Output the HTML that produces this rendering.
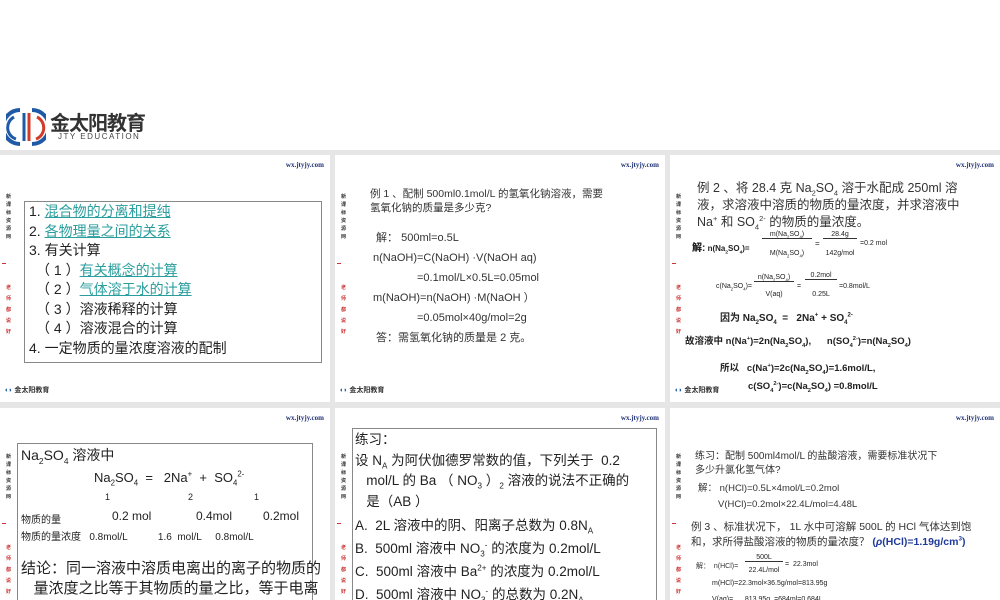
<!DOCTYPE html>
<html><head><meta charset="utf-8"><style>
*{margin:0;padding:0;box-sizing:border-box}
body{width:1000px;height:600px;overflow:hidden;background:#fff;position:relative;font-family:"Liberation Sans","Noto Sans CJK SC",sans-serif;color:#222}
.bg{position:absolute;left:0;top:150px;width:1000px;height:450px;background:#e6e6e6}
.s{position:absolute;background:#fff;overflow:hidden}
.s div{position:absolute;white-space:nowrap}
.url{right:6px;top:6px;font:bold 7px "Liberation Serif",serif;color:#223377}
.side{left:6px;top:38px;width:6px;font-size:5px;line-height:8px;color:#333;font-weight:bold;white-space:normal!important}
.red{color:#c33}
.dash{left:2px;top:108px;width:4px;height:1px;background:#c33}
.box{border:1px solid #888}
.u{color:#2a9d9d;text-decoration:underline}
sub,sup{font-size:60%;line-height:0}
.ml{font-size:11px;line-height:20px}
</style></head><body>
<svg style="position:absolute;left:6px;top:107px" width="40" height="40" viewBox="0 0 40 40">
<path d="M14 3 A17 17 0 0 0 14 37" fill="none" stroke="#1f5aa6" stroke-width="4"/>
<path d="M8 10 A12 12 0 0 0 10 32" fill="none" stroke="#1f5aa6" stroke-width="3"/>
<path d="M18 6 L18 34" stroke="#1f5aa6" stroke-width="3"/>
<path d="M23 6 L23 34" stroke="#d23b2b" stroke-width="3"/>
<path d="M26 3 A17 17 0 0 1 26 37" fill="none" stroke="#1f5aa6" stroke-width="4"/>
<path d="M31 10 A12 12 0 0 1 30 32" fill="none" stroke="#d23b2b" stroke-width="3"/>
</svg>
<div style="position:absolute;left:50px;top:107px;font-size:20px;font-weight:bold;color:#333;letter-spacing:-1px">金太阳教育</div>
<div style="position:absolute;left:58px;top:132px;font-size:8px;color:#444;letter-spacing:1.5px">JTY EDUCATION</div>
<div class="bg"></div>

<!-- slide 1 -->
<div class="s" style="left:0;top:155px;width:330px;height:247px">
<div class="url">wx.jtyjy.com</div>
<div class="side">新课标资源网</div><div class="dash"></div>
<div class="side red" style="top:128px;line-height:11px">老师都说好</div>
<div class="box" style="left:24px;top:46px;width:298px;height:162px"></div>
<div style="left:29px;top:47px;font-size:14px;line-height:19.5px">1. <span class="u">混合物的分离和提纯</span><br>2. <span class="u">各物理量之间的关系</span><br>3. 有关计算<br>　（ 1 ）<span class="u">有关概念的计算</span><br>　（ 2 ）<span class="u">气体溶于水的计算</span><br>　（ 3 ）溶液稀释的计算<br>　（ 4 ）溶液混合的计算<br>4. 一定物质的量浓度溶液的配制</div>
<div style="left:4px;top:230px;font-size:7px;font-weight:bold;color:#1f5aa6">◖◗ <span style="color:#333">金太阳教育</span></div>
</div>

<!-- slide 2 -->
<div class="s" style="left:335px;top:155px;width:330px;height:247px">
<div class="url">wx.jtyjy.com</div>
<div class="side">新课标资源网</div><div class="dash"></div>
<div class="side red" style="top:128px;line-height:11px">老师都说好</div>
<div style="left:35px;top:32px;font-size:10.5px;line-height:14px;color:#333">例 1 、配制 500ml0.1mol/L 的氢氧化钠溶液，需要<br>氢氧化钠的质量是多少克?</div>
<div class="ml" style="left:38px;top:73px;color:#333">&nbsp;解： 500ml=o.5L<br>n(NaOH)=C(NaOH) ·V(NaOH aq)<br>　　　　=0.1mol/L×0.5L=0.05mol<br>m(NaOH)=n(NaOH) ·M(NaOH ）<br>　　　　=0.05mol×40g/mol=2g<br>&nbsp;答：需氢氧化钠的质量是 2 克。</div>
<div style="left:4px;top:230px;font-size:7px;font-weight:bold;color:#1f5aa6">◖◗ <span style="color:#333">金太阳教育</span></div>
</div>

<!-- slide 3 -->
<div class="s" style="left:670px;top:155px;width:330px;height:247px">
<div class="url">wx.jtyjy.com</div>
<div class="side">新课标资源网</div><div class="dash"></div>
<div class="side red" style="top:128px;line-height:11px">老师都说好</div>
<div style="left:27px;top:25px;font-size:12.5px;line-height:17px;color:#333">例 2 、将 28.4 克 Na<sub>2</sub>SO<sub>4</sub> 溶于水配成 250ml 溶<br>液，求溶液中溶质的物质的量浓度，并求溶液中<br>Na<sup>+</sup> 和 SO<sub>4</sub><sup>2-</sup> 的物质的量浓度。</div>
<div style="left:22px;top:84px;font-size:8px;font-weight:bold"><b style="font-size:10px">解:</b> n(Na<sub>2</sub>SO<sub>4</sub>)=</div>
<div style="left:92px;top:76px;font-size:7px;width:50px;text-align:center;border-bottom:1px solid #333">m(Na<sub>2</sub>SO<sub>4</sub>)</div>
<div style="left:92px;top:95px;font-size:7px;width:50px;text-align:center">M(Na<sub>2</sub>SO<sub>4</sub>)</div>
<div style="left:145px;top:84px;font-size:8px">=</div>
<div style="left:153px;top:76px;font-size:7px;width:34px;text-align:center;border-bottom:1px solid #333">28.4g</div>
<div style="left:153px;top:95px;font-size:7px;width:34px;text-align:center">142g/mol</div>
<div style="left:190px;top:85px;font-size:7px">=0.2 mol</div>
<div style="left:46px;top:128px;font-size:7px">c(Na<sub>2</sub>SO<sub>4</sub>)=</div>
<div style="left:84px;top:119px;font-size:7px;width:40px;text-align:center;border-bottom:1px solid #333">n(Na<sub>2</sub>SO<sub>4</sub>)</div>
<div style="left:84px;top:136px;font-size:7px;width:40px;text-align:center">V(aq)</div>
<div style="left:127px;top:128px;font-size:7px">=</div>
<div style="left:135px;top:117px;font-size:7px;width:32px;text-align:center;border-bottom:1px solid #333">0.2mol</div>
<div style="left:135px;top:136px;font-size:7px;width:32px;text-align:center">0.25L</div>
<div style="left:169px;top:128px;font-size:7px">=0.8mol/L</div>
<div style="left:50px;top:154px;font-size:10px;font-weight:bold">因为 Na<sub>2</sub>SO<sub>4</sub> &nbsp;= &nbsp; 2Na<sup>+</sup> + SO<sub>4</sub><sup>2-</sup></div>
<div style="left:15px;top:178px;font-size:9.5px;font-weight:bold">故溶液中 n(Na<sup>+</sup>)=2n(Na<sub>2</sub>SO<sub>4</sub>), &nbsp;&nbsp;&nbsp;&nbsp;&nbsp;n(SO<sub>4</sub><sup>2-</sup>)=n(Na<sub>2</sub>SO<sub>4</sub>)</div>
<div style="left:50px;top:205px;font-size:9.5px;font-weight:bold">所以 &nbsp;&nbsp;c(Na<sup>+</sup>)=2c(Na<sub>2</sub>SO<sub>4</sub>)=1.6mol/L,</div>
<div style="left:78px;top:226px;font-size:9.5px;font-weight:bold">c(SO<sub>4</sub><sup>2-</sup>)=c(Na<sub>2</sub>SO<sub>4</sub>) =0.8mol/L</div>
<div style="left:4px;top:230px;font-size:7px;font-weight:bold;color:#1f5aa6">◖◗ <span style="color:#333">金太阳教育</span></div>
</div>

<!-- row 2 slide 1 -->
<div class="s" style="left:0;top:408px;width:330px;height:192px">
<div class="url">wx.jtyjy.com</div>
<div class="side" style="top:45px">新课标资源网</div><div class="dash" style="top:115px"></div>
<div class="side red" style="top:135px;line-height:11px">老师都说好</div>
<div class="box" style="left:17px;top:35px;width:296px;height:170px"></div>
<div style="left:21px;top:37px;font-size:14px">Na<sub>2</sub>SO<sub>4</sub> 溶液中</div>
<div style="left:94px;top:62px;font-size:13px">Na<sub>2</sub>SO<sub>4</sub> &nbsp;= &nbsp;&nbsp;2Na<sup>+</sup> &nbsp;+ &nbsp;SO<sub>4</sub><sup>2-</sup></div>
<div style="left:105px;top:84px;font-size:9px">1</div>
<div style="left:188px;top:84px;font-size:9px">2</div>
<div style="left:254px;top:84px;font-size:9px">1</div>
<div style="left:21px;top:103px;font-size:10px">物质的量</div>
<div style="left:112px;top:101px;font-size:12px">0.2 mol</div>
<div style="left:196px;top:101px;font-size:12px">0.4mol</div>
<div style="left:263px;top:101px;font-size:12px">0.2mol</div>
<div style="left:21px;top:120px;font-size:10px">物质的量浓度 &nbsp;&nbsp;0.8mol/L &nbsp;&nbsp;&nbsp;&nbsp;&nbsp;&nbsp;&nbsp;&nbsp;&nbsp;&nbsp;1.6 &nbsp;mol/L &nbsp;&nbsp;&nbsp;&nbsp;0.8mol/L</div>
<div style="left:21px;top:151px;font-size:15px;line-height:20px">结论：同一溶液中溶质电离出的离子的物质的<br>&nbsp;&nbsp;&nbsp;量浓度之比等于其物质的量之比，等于电离</div>
</div>

<!-- row 2 slide 2 -->
<div class="s" style="left:335px;top:408px;width:330px;height:192px">
<div class="url">wx.jtyjy.com</div>
<div class="side" style="top:45px">新课标资源网</div><div class="dash" style="top:115px"></div>
<div class="side red" style="top:135px;line-height:11px">老师都说好</div>
<div class="box" style="left:17px;top:20px;width:305px;height:180px"></div>
<div style="left:20px;top:22px;font-size:13.5px;line-height:20.5px">练习：<br>设 N<sub>A</sub> 为阿伏伽德罗常数的值，下列关于 &nbsp;0.2<br>&nbsp;&nbsp;&nbsp;mol/L 的 Ba （ NO<sub>3</sub> ）<sub>2</sub> 溶液的说法不正确的<br>&nbsp;&nbsp;&nbsp;是（AB ）</div>
<div style="left:20px;top:106px;font-size:13.5px;line-height:23px">A.&nbsp; 2L 溶液中的阴、阳离子总数为 0.8N<sub>A</sub><br>B.&nbsp; 500ml 溶液中 NO<sub>3</sub><sup>-</sup> 的浓度为 0.2mol/L<br>C.&nbsp; 500ml 溶液中 Ba<sup>2+</sup> 的浓度为 0.2mol/L<br>D.&nbsp; 500ml 溶液中 NO<sub>3</sub><sup>-</sup> 的总数为 0.2N<sub>A</sub></div>
</div>

<!-- row 2 slide 3 -->
<div class="s" style="left:670px;top:408px;width:330px;height:192px">
<div class="url">wx.jtyjy.com</div>
<div class="side" style="top:45px">新课标资源网</div><div class="dash" style="top:115px"></div>
<div class="side red" style="top:135px;line-height:11px">老师都说好</div>
<div style="left:25px;top:42px;font-size:10px;line-height:14px;color:#333">练习：配制 500ml4mol/L 的盐酸溶液，需要标准状况下<br>多少升氯化氢气体?</div>
<div style="left:28px;top:72px;font-size:9.5px;color:#333">解： n(HCl)=0.5L×4mol/L=0.2mol</div>
<div style="left:48px;top:91px;font-size:9.5px;color:#333">V(HCl)=0.2mol×22.4L/mol=4.48L</div>
<div style="left:21px;top:112px;font-size:10.5px;line-height:15px;color:#333">例 3 、标准状况下， 1L 水中可溶解 500L 的 HCl 气体达到饱<br>和，求所得盐酸溶液的物质的量浓度？ <b style="color:#1f3a99">(<i>ρ</i>(HCl)=1.19g/cm<sup>3</sup>)</b></div>
<div style="left:26px;top:153px;font-size:7px;color:#333">解：&nbsp; n(HCl)=</div>
<div style="left:75px;top:146px;font-size:7px;width:38px;text-align:center;border-bottom:1px solid #333">500L</div>
<div style="left:75px;top:159px;font-size:7px;width:38px;text-align:center">22.4L/mol</div>
<div style="left:115px;top:153px;font-size:7px">= &nbsp;22.3mol</div>
<div style="left:42px;top:172px;font-size:7px">m(HCl)=22.3mol×36.5g/mol=813.95g</div>
<div style="left:42px;top:188px;font-size:7px">V(aq)= &nbsp;&nbsp;&nbsp;&nbsp;&nbsp;<span style="border-bottom:1px solid #333">813.95g</span> &nbsp;=684ml=0.684L</div>
</div>
</body></html>
